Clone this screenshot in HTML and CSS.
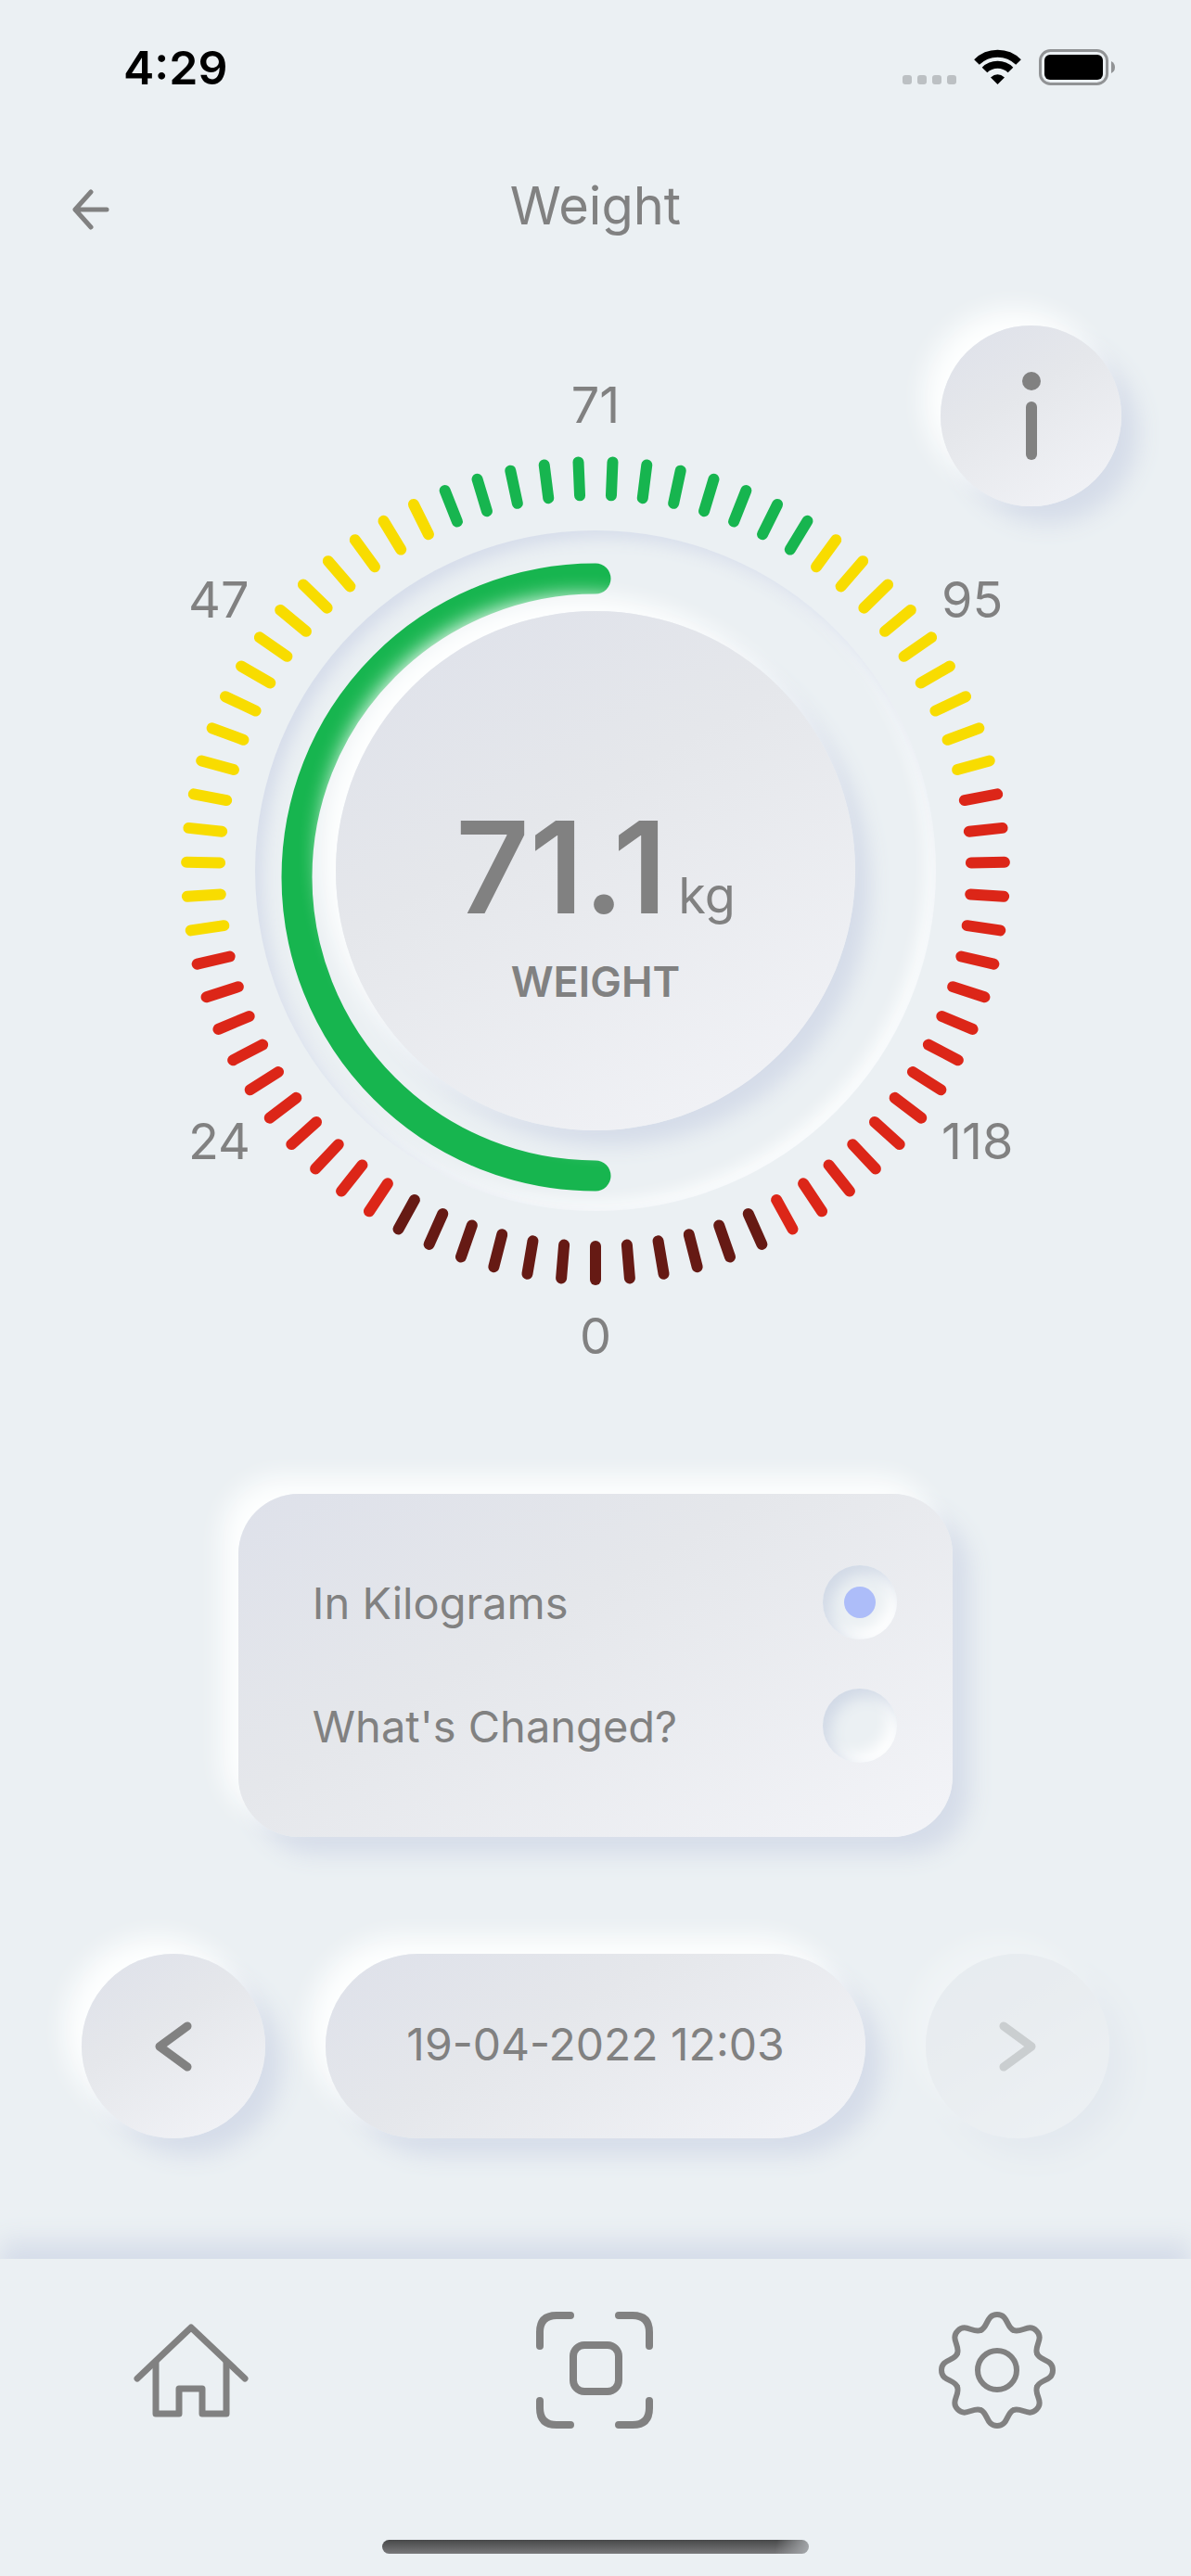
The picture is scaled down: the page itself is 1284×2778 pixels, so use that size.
FILE: index.html
```html
<!DOCTYPE html>
<html lang="en">
<head>
    <meta charset="UTF-8">
    <meta name="viewport" content="width=device-width, initial-scale=1.0">
    <title>Weight</title>
    <link rel="stylesheet" href="styles.css">
</head>
<body>
    <div class="status-bar">
        <span class="time">4:29</span>
        <svg class="status-icons" viewBox="0 0 232 40" width="232" height="40" aria-hidden="true">
            <g fill="#bcc0c3">
                <rect x="0" y="28" width="10" height="10" rx="3"/>
                <rect x="16" y="28" width="10" height="10" rx="3"/>
                <rect x="32" y="28" width="10" height="10" rx="3"/>
                <rect x="48" y="28" width="10" height="10" rx="3"/>
            </g>
            <g fill="none" stroke="#000" stroke-width="8">
                <path d="M80 14 A32 32 0 0 1 125 14"/>
                <path d="M88.500 22.500 A20 20 0 0 1 116.500 22.500"/>
            </g>
            <path d="M95 30.500 Q102.500 24 110 30.500 L102.500 38 Z"/>
            <rect x="148.500" y="1.500" width="72" height="36" rx="11" fill="none" stroke="#919395" stroke-width="3"/>
            <rect x="153" y="6" width="63" height="27" rx="6"/>
            <path d="M225 13 Q229 15 229 19.500 T225 26 Z" fill="#919395"/>
        </svg>
    </div>

    <header class="header">
        <button class="back" type="button" aria-label="Back">
            <svg viewBox="0 0 40 44" width="40" height="44"><path d="M20 3 L3 22 L20 41 M3 22 H37"/></svg>
        </button>
        <h1>Weight</h1>
    </header>

    <button class="info raised" type="button" aria-label="Info">
        <svg viewBox="0 0 20 96" width="20" height="96">
            <circle cx="10" cy="10" r="10"/>
            <rect x="4" y="32" width="12" height="63" rx="6"/>
        </svg>
    </button>

    <main>
        <section class="gauge">
            <span class="mark">71</span>
            <div class="dial">
                <div class="ring"></div>
                <svg class="scale" viewBox="0 0 896 896">
                    <g id="ticks"></g>
                    <path class="progress" d="M448 133 A322 322 0 0 0 448 777"/>
                </svg>
                <div class="disc raised">
                    <div class="reading"><strong>71.1</strong><span>kg</span></div>
                    <div class="caption">WEIGHT</div>
                </div>
                <span class="mark mark-47">47</span>
                <span class="mark mark-95">95</span>
                <span class="mark mark-24">24</span>
                <span class="mark mark-118">118</span>
            </div>
            <span class="mark">0</span>
        </section>

        <form class="options raised">
            <div class="option">
                <label for="kilograms">In Kilograms</label>
                <input type="radio" id="kilograms" name="view" checked>
            </div>
            <div class="option">
                <label for="changed">What's Changed?</label>
                <input type="radio" id="changed" name="view">
            </div>
        </form>

        <div class="history">
            <button class="step raised" type="button" aria-label="Previous">
                <svg viewBox="0 0 40 54" width="40" height="54"><path d="M35 5 L5 27 L35 49"/></svg>
            </button>
            <button class="date raised" type="button">19-04-2022 12:03</button>
            <button class="step raised" type="button" aria-label="Next" disabled>
                <svg viewBox="0 0 40 54" width="40" height="54"><path d="M5 5 L35 27 L5 49"/></svg>
            </button>
        </div>
    </main>

    <nav class="tab-bar">
        <div class="tabs">
            <a href="#home" aria-label="Home">
                <svg viewBox="0 0 126 126" stroke-width="7">
                    <path d="M4 72 L62 17 L120 72"/>
                    <path d="M24 54 V110 H49 V83 H74 V110 H100 V54"/>
                </svg>
            </a>
            <a href="#scan" aria-label="Scan">
                <svg viewBox="0 0 126 126" stroke-width="8">
                    <path d="M4 37 V22 Q4 4 22 4 H37 M89 4 H104 Q122 4 122 22 V37 M122 96 V104 Q122 122 104 122 H89 M37 122 H22 Q4 122 4 104 V96"/>
                    <rect x="40" y="36" width="49" height="50" rx="12"/>
                </svg>
            </a>
            <a href="#settings" aria-label="Settings">
                <svg viewBox="0 0 126 126" stroke-width="6">
                    <defs>
                        <path id="tooth" d="M-17.800 -43 C-9.500 -46.500 -12 -60 0 -60 C12 -60 9.500 -46.500 17.800 -43"/>
                    </defs>
                    <g transform="translate(63 63)">
                        <use href="#tooth"/>
                        <use href="#tooth" transform="rotate(45)"/>
                        <use href="#tooth" transform="rotate(90)"/>
                        <use href="#tooth" transform="rotate(135)"/>
                        <use href="#tooth" transform="rotate(180)"/>
                        <use href="#tooth" transform="rotate(225)"/>
                        <use href="#tooth" transform="rotate(270)"/>
                        <use href="#tooth" transform="rotate(315)"/>
                        <circle r="21"/>
                    </g>
                </svg>
            </a>
        </div>
        <div class="home-indicator"></div>
    </nav>

    <script src="gauge.js"></script>
</body>
</html>
```
FILE: styles.css
```css
* {
    box-sizing: border-box;
}
body {
    margin: 0;
    min-height: 100vh;
    display: flex;
    flex-direction: column;
    position: relative;
    background: #ebf0f3;
    color: #818181;
    font-family: Inter, "Liberation Sans", sans-serif;
    font-size: 48px;
    overflow-x: hidden;
}
button {
    border: none;
    padding: 0;
    background: none;
    color: inherit;
    font: inherit;
    cursor: pointer;
}
.raised {
    background: linear-gradient(150deg, #dee1ea, #e5e7eb 40%, #f3f4f8);
    box-shadow: -18px -18px 26px #fdfefe, 18px 18px 26px #d5dce9;
}

/* Status bar and header */
.status-bar {
    height: 146px;
    padding: 0 79px 0 133px;
    display: flex;
    align-items: center;
    justify-content: space-between;
    color: #000;
}
.time {
    font-size: 50px;
    font-weight: 600;
}
.header {
    height: 152px;
    padding: 0 78px;
    display: grid;
    grid-template-columns: 1fr auto 1fr;
    align-items: center;
}
.header h1 {
    margin: 0;
    font-size: 56px;
    font-weight: 400;
}
.back {
    justify-self: start;
    padding-top: 8px;
}
.back svg {
    display: block;
    fill: none;
    stroke: #818181;
    stroke-width: 5;
    stroke-linecap: round;
    stroke-linejoin: round;
}
.info {
    position: absolute;
    top: 351px;
    right: 75px;
    width: 195px;
    height: 195px;
    border-radius: 50%;
    display: grid;
    place-items: center;
}
.info svg {
    fill: #818181;
}

/* Gauge */
.gauge {
    margin-top: 107px;
    display: flex;
    flex-direction: column;
    align-items: center;
    gap: 22px;
}
.mark {
    font-size: 54px;
    line-height: 64px;
}
.dial {
    position: relative;
    width: 896px;
    height: 896px;
    display: grid;
    place-items: center;
}
.ring, .scale, .disc {
    grid-area: 1 / 1;
}
.ring {
    width: 734px;
    height: 734px;
    border-radius: 50%;
    box-shadow: inset 8px 8px 18px #d5dcea, inset -8px -8px 18px #fdfefe;
}
.scale {
    width: 100%;
    height: 100%;
    fill: none;
    stroke-linecap: round;
    stroke-width: 12;
}
.progress {
    stroke: #17b54f;
    stroke-width: 33;
}
.disc {
    width: 560px;
    height: 560px;
    padding-top: 76px;
    border-radius: 50%;
    display: flex;
    flex-direction: column;
    align-items: center;
    justify-content: center;
    gap: 28px;
    z-index: 1;
    box-shadow: -16px -16px 22px #fdfefe, 16px 16px 22px #d5dce9;
}
.reading {
    display: flex;
    align-items: baseline;
    gap: 12px;
    line-height: 136px;
}
.reading strong {
    font-size: 138px;
    font-weight: 600;
}
.reading span {
    font-size: 54px;
    line-height: 64px;
}
.caption {
    font-size: 45px;
    font-weight: 600;
    line-height: 56px;
}
.mark-47, .mark-95, .mark-24, .mark-118 {
    position: absolute;
}
.mark-47 { top: 124px; left: 9px; }
.mark-95 { top: 124px; left: 821px; }
.mark-24 { top: 708px; left: 9px; }
.mark-118 { top: 708px; left: 821px; }

/* Display options */
.options {
    width: 60%;
    margin: 138px auto 0;
    padding: 77px 60px 80px 80px;
    border-radius: 65px;
    display: flex;
    flex-direction: column;
    gap: 53px;
    font-size: 47px;
}
.option {
    display: flex;
    align-items: center;
    justify-content: space-between;
}
.option input {
    appearance: none;
    width: 80px;
    height: 80px;
    margin: 0;
    border-radius: 50%;
    display: grid;
    place-items: center;
    background: #ebf0f3;
    box-shadow: inset 8px 8px 16px #d1d9e6, inset -8px -8px 16px #fff;
}
.option input:checked::before {
    content: "";
    width: 34px;
    height: 34px;
    border-radius: 50%;
    background: #adbdf9;
}

/* Measurement history */
.history {
    margin-top: 126px;
    padding: 0 88px;
    display: flex;
    gap: 65px;
}
.step {
    width: 198px;
    height: 199px;
    border-radius: 50%;
    display: grid;
    place-items: center;
}
.step svg {
    fill: none;
    stroke: #818181;
    stroke-width: 9;
    stroke-linecap: round;
    stroke-linejoin: round;
}
.step:disabled {
    opacity: 0.3;
}
.date {
    flex: 1;
    padding-bottom: 4px;
    border-radius: 100px;
}

/* Bottom tab bar */
.tab-bar {
    margin-top: auto;
    padding: 57px 0 24px;
    background: #ebf0f3;
    box-shadow: 0 -18px 26px #d5dce9;
}
.tabs {
    padding: 0 146px 0 144px;
    display: flex;
    justify-content: space-between;
}
.tabs svg {
    display: block;
    width: 126px;
    height: 126px;
    fill: none;
    stroke: #818181;
    stroke-linecap: round;
    stroke-linejoin: round;
}
.home-indicator {
    width: 460px;
    height: 15px;
    margin: 120px auto 0;
    border-radius: 8px;
    background: linear-gradient(100deg, transparent 92%, #a5a8ab), linear-gradient(#474849, #79797b);
}
```
FILE: gauge.js
```js
// 75 ticks drawn clockwise from the top, coloured by zone
const zones = [
    { until: 7, color: '#17b54f' },
    { until: 16, color: '#f8dc00' },
    { until: 32, color: '#dc2618' },
    { until: 44, color: '#661a14' },
    { until: 54, color: '#dc2618' },
    { until: 70, color: '#f8dc00' },
    { until: 75, color: '#17b54f' }
];

const ticks = document.getElementById('ticks');

for (let i = 0; i < 75; i++) {
    const line = document.createElementNS('http://www.w3.org/2000/svg', 'line');
    line.setAttribute('x1', 448);
    line.setAttribute('x2', 448);
    line.setAttribute('y1', 7);
    line.setAttribute('y2', 43);
    line.setAttribute('stroke', zones.find(zone => i < zone.until).color);
    line.setAttribute('transform', `rotate(${2.4 + i * 4.8} 448 448)`);
    ticks.appendChild(line);
}
```
